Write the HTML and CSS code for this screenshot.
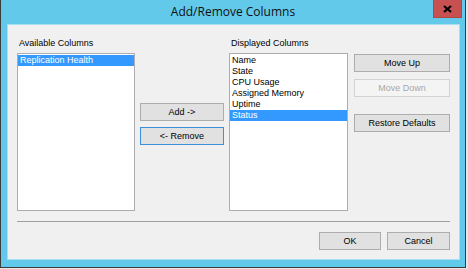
FILE: index.html
```html
<!DOCTYPE html>
<html lang="en">
<head>
    <meta charset="UTF-8">
    <title>Add/Remove Columns</title>
    <link rel="stylesheet" href="styles.css">
</head>
<body>
  <div class="window">
    <div class="titlebar">
      <span class="title">Add/Remove Columns</span>
      <button type="button" class="close">
        <svg width="9" height="8" viewBox="0 0 9 8">
          <path d="M1 1 L8 7 M8 1 L1 7" stroke="#000" stroke-width="2.2" fill="none"/>
        </svg>
      </button>
    </div>

    <div class="client">
      <div class="columns">
        <div class="list-col available">
          <div class="label">Available Columns</div>
          <ul class="listbox">
            <li class="selected">Replication Health</li>
          </ul>
        </div>

        <div class="mid-col">
          <button type="button" class="btn">Add -&gt;</button>
          <button type="button" class="btn focused">&lt;- Remove</button>
        </div>

        <div class="list-col displayed">
          <div class="label">Displayed Columns</div>
          <ul class="listbox">
            <li>Name</li>
            <li>State</li>
            <li>CPU Usage</li>
            <li>Assigned Memory</li>
            <li>Uptime</li>
            <li class="selected">Status</li>
          </ul>
        </div>

        <div class="side-col">
          <button type="button" class="btn">Move Up</button>
          <button type="button" class="btn" disabled>Move Down</button>
          <button type="button" class="btn restore">Restore Defaults</button>
        </div>
      </div>

      <div class="separator"></div>

      <div class="footer">
        <button type="button" class="btn ok">OK</button>
        <button type="button" class="btn cancel">Cancel</button>
      </div>
    </div>
  </div>
</body>
</html>
```

FILE: styles.css
```css
body {
    margin: 0;
    background: #e6e6e6;
    font-family: "Liberation Sans", Arial, sans-serif;
    font-size: 9px;
    color: #000;
}

.window {
    box-sizing: border-box;
    width: 466px;
    height: 268px;
    background: #63c9ea;
    border: 1px solid #3c3c3c;
    border-top: none;
    display: flex;
    flex-direction: column;
}

.titlebar {
    position: relative;
    height: 24px;
    display: flex;
    align-items: center;
    justify-content: center;
}

.title {
    font-family: "Open Sans", "Liberation Sans", sans-serif;
    font-size: 12px;
    color: #111;
    margin-top: -1px;
}

.close {
    position: absolute;
    top: 0;
    right: 3px;
    width: 29px;
    height: 18px;
    padding: 0;
    border: 1px solid #b34545;
    border-top: none;
    background: #c75050;
    display: flex;
    align-items: center;
    justify-content: center;
}

.client {
    box-sizing: border-box;
    width: 453px;
    height: 236px;
    margin-left: 6px;
    padding: 12px 9px 0 9px;
    background: #f0f0f0;
    border: 1px solid #a9dff2;
}

.columns {
    display: flex;
}

.list-col {
    display: flex;
    flex-direction: column;
}

.available {
    width: 118px;
}

.displayed {
    width: 119px;
}

.label {
    line-height: 11px;
    padding-top: 1px;
    margin-bottom: 4px;
    padding-left: 2px;
}

.listbox {
    box-sizing: border-box;
    height: 158px;
    margin: 0;
    padding: 1px 0 0 0;
    list-style: none;
    background: #fff;
    border: 1px solid #abadb3;
}

.listbox li {
    height: 11px;
    line-height: 11px;
    padding-left: 2px;
    white-space: nowrap;
}

.listbox .selected {
    background: #3399ff;
    color: #fff;
}

.btn {
    box-sizing: border-box;
    height: 18px;
    padding: 0;
    font-family: "Liberation Sans", Arial, sans-serif;
    font-size: 9px;
    color: #000;
    background: #e1e1e1;
    border: 1px solid #adadad;
}

.btn.focused {
    border-color: #3c8fd8;
}

.btn:disabled {
    background: #f4f4f4;
    border-color: #d3d3d3;
    color: #a8a8a8;
}

.mid-col {
    width: 84px;
    margin: 0 5px;
    padding-top: 66px;
    display: flex;
    flex-direction: column;
    gap: 6px;
}

.side-col {
    width: 96px;
    margin-left: 6px;
    padding-top: 17px;
    display: flex;
    flex-direction: column;
    gap: 7px;
}

.side-col .restore {
    margin-top: 10px;
}

.separator {
    height: 1px;
    margin-top: 10px;
    background: #a0a0a0;
}

.footer {
    display: flex;
    justify-content: flex-end;
    gap: 6px;
    margin-top: 10px;
}

.ok {
    width: 62px;
}

.cancel {
    width: 63px;
}
```
